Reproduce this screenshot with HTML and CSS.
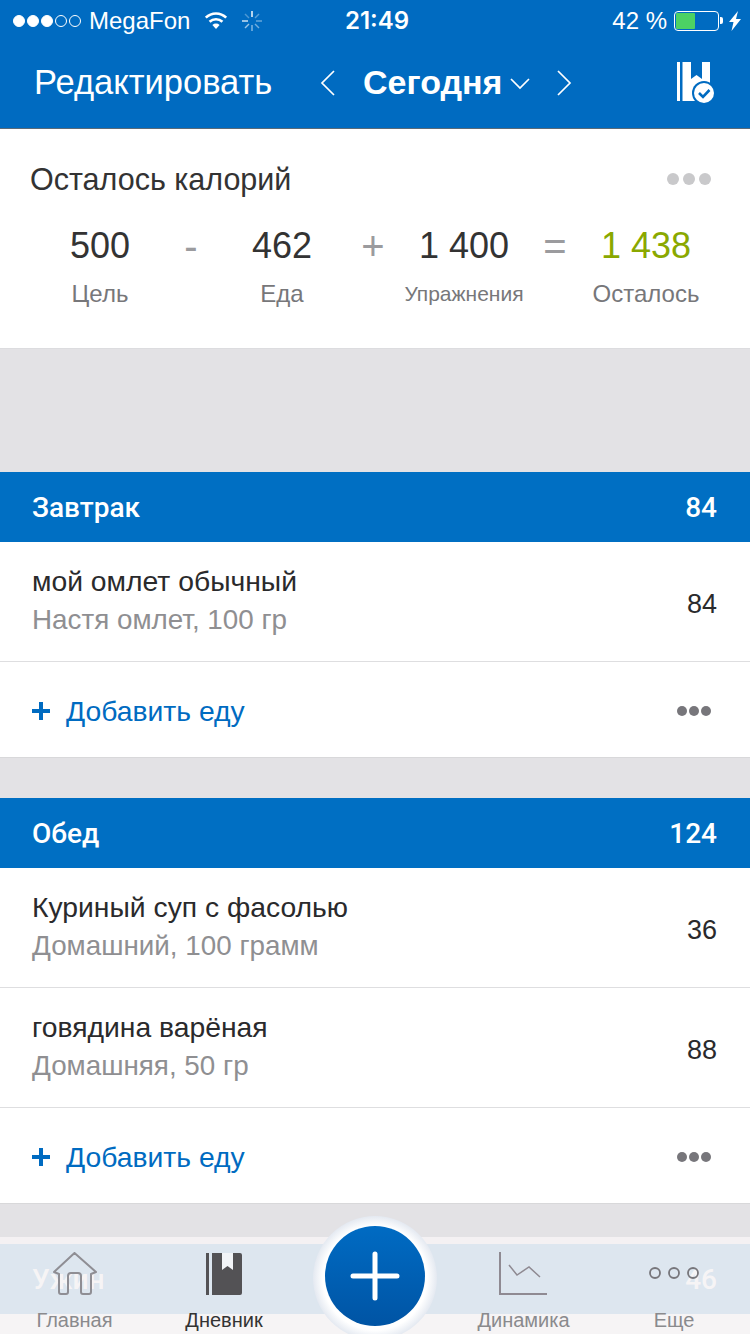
FILE: index.html
```html
<!DOCTYPE html>
<html lang="ru">
<head>
<meta charset="utf-8">
<title>Дневник</title>
<link rel="stylesheet" href="styles.css">
</head>
<body>
<div class="screen">
  <header class="top">
    <div class="status">
      <div class="status-left">
        <span class="signal"><i class="on"></i><i class="on"></i><i class="on"></i><i></i><i></i></span>
        <span class="carrier">MegaFon</span>
        <svg class="wifi" width="26" height="20" viewBox="0 0 26 20"><path d="M13 18l-3.600-4a5.200 5.200 0 0 1 7.200 0z" fill="#fff"/><path d="M6.600 10.800a9.200 9.200 0 0 1 12.800 0M2.800 6.600a14.600 14.600 0 0 1 20.400 0" fill="none" stroke="#fff" stroke-width="2.600"/></svg>
        <svg class="spin" width="22" height="22" viewBox="0 0 22 22" stroke="#fff" stroke-width="1.500"><path d="M11 1v6" opacity=".95"/><path d="M18 4l-4 4" opacity=".35"/><path d="M21 11h-6" opacity=".4"/><path d="M18 18l-4-4" opacity=".45"/><path d="M11 21v-6" opacity=".5"/><path d="M4 18l4-4" opacity=".6"/><path d="M1 11h6" opacity=".8"/><path d="M4 4l4 4" opacity=".3"/></svg>
      </div>
      <div class="clock">21:49</div>
      <div class="status-right">
        <span class="pct">42 %</span>
        <span class="battery"><span class="battery-fill"></span></span>
        <span class="battery-cap"></span>
        <svg width="12" height="20" viewBox="0 0 12 20"><path d="M9 0L0 11h4.500L2.500 20 12 8H7z" fill="#fff"/></svg>
      </div>
    </div>
    <nav class="nav">
      <span class="edit">Редактировать</span>
      <div class="date">
        <svg width="16" height="28" viewBox="0 0 16 28"><path d="M14 2L2 14l12 12" fill="none" stroke="#fff" stroke-width="1.700"/></svg>
        <span class="today">Сегодня</span>
        <svg class="caret" width="20" height="12" viewBox="0 0 20 12"><path d="M1 1l9 9 9-9" fill="none" stroke="#fff" stroke-width="1.700"/></svg>
        <svg class="next" width="16" height="28" viewBox="0 0 16 28"><path d="M2 2l12 12L2 26" fill="none" stroke="#fff" stroke-width="1.700"/></svg>
      </div>
      <svg class="book-check" width="38" height="44" viewBox="0 0 38 44">
        <path d="M0 1h3v39H0zM5.500 1H33v39H5.500z" fill="#fff"/>
        <path d="M14 1h11v17l-5.500-4-5.500 4z" fill="#006bc1"/>
        <circle cx="27" cy="32" r="12" fill="#006bc1"/>
        <circle cx="27" cy="32" r="10" fill="#fff"/>
        <path d="M22 32l4 4 6.500-7" fill="none" stroke="#006bc1" stroke-width="2.600"/>
      </svg>
    </nav>
  </header>

  <section class="summary">
    <div class="summary-head">
      <h2>Осталось калорий</h2>
      <span class="dots dots-light"><i></i><i></i><i></i></span>
    </div>
    <div class="equation">
      <div class="term"><b>500</b><span>Цель</span></div>
      <div class="op">-</div>
      <div class="term"><b>462</b><span>Еда</span></div>
      <div class="op">+</div>
      <div class="term"><b>1 400</b><span class="label-small">Упражнения</span></div>
      <div class="op">=</div>
      <div class="term"><b class="green">1 438</b><span>Осталось</span></div>
    </div>
  </section>

  <div class="spacer-ad"></div>

  <section class="meal">
    <div class="meal-head"><span>Завтрак</span><span>84</span></div>
    <div class="item">
      <div class="item-text"><div class="name">мой омлет обычный</div><div class="desc">Настя омлет, 100 гр</div></div>
      <div class="kcal">84</div>
    </div>
    <div class="add">
      <span class="plus"></span><span class="add-text">Добавить еду</span>
      <span class="dots dots-dark"><i></i><i></i><i></i></span>
    </div>
  </section>

  <section class="meal">
    <div class="meal-head"><span>Обед</span><span>124</span></div>
    <div class="item">
      <div class="item-text"><div class="name">Куриный суп с фасолью</div><div class="desc">Домашний, 100 грамм</div></div>
      <div class="kcal">36</div>
    </div>
    <div class="item">
      <div class="item-text"><div class="name">говядина варёная</div><div class="desc">Домашняя, 50 гр</div></div>
      <div class="kcal">88</div>
    </div>
    <div class="add">
      <span class="plus"></span><span class="add-text">Добавить еду</span>
      <span class="dots dots-dark"><i></i><i></i><i></i></span>
    </div>
  </section>

  <section class="meal">
    <div class="meal-head"><span>Ужин</span><span>46</span></div>
    <div class="item"></div>
  </section>

  <footer class="tabbar">
    <div class="tab">
      <svg width="46" height="44" viewBox="0 0 46 44" fill="none" stroke="#8f8e94" stroke-width="2"><path d="M7 22L2 20 22.500 1 44 20l-5 2v18a2 2 0 0 1-2 2h-6a2 2 0 0 1-2-2V24a3 3 0 0 0-3-3h-7a3 3 0 0 0-3 3v16a2 2 0 0 1-2 2H9a2 2 0 0 1-2-2z" stroke-linejoin="round"/></svg>
      <span>Главная</span>
    </div>
    <div class="tab tab-active">
      <svg width="36" height="44" viewBox="0 0 36 44"><path d="M0 1h3v42H0zM6 1h28a2 2 0 0 1 2 2v38a2 2 0 0 1-2 2H6z" fill="#535255"/><path d="M16 1h11v17l-5.500-4-5.500 4z" fill="#f2f4f7"/></svg>
      <span>Дневник</span>
    </div>
    <div class="tab tab-gap"></div>
    <div class="tab">
      <svg width="50" height="44" viewBox="0 0 50 44" fill="none" stroke="#8f8a92" stroke-width="2"><path d="M1 0v42h47"/><path d="M10 13l8 10 12-8 11 10" stroke-width="1.500"/></svg>
      <span>Динамика</span>
    </div>
    <div class="tab">
      <svg width="52" height="44" viewBox="0 0 52 44" fill="none" stroke="#77767b" stroke-width="1.800"><circle cx="7" cy="21" r="5"/><circle cx="26" cy="21" r="5"/><circle cx="45" cy="21" r="5"/></svg>
      <span>Еще</span>
    </div>
    <div class="fab">
      <div class="fab-inner">
        <svg width="50" height="50" viewBox="0 0 50 50"><path d="M25 3v44M3 25h44" stroke="#fff" stroke-width="5" stroke-linecap="round"/></svg>
      </div>
    </div>
  </footer>
</div>
</body>
</html>
```

FILE: styles.css
```css
* { box-sizing: border-box; }
html, body { margin: 0; padding: 0; }
body { font-family: "Liberation Sans", Arial, sans-serif; }
.screen {
  position: relative;
  width: 750px;
  height: 1334px;
  overflow: hidden;
  background: #e3e2e5;
  color: #2a2a2c;
}

/* top */
.top {
  height: 129px;
  background: #006bc1;
  border-bottom: 1px solid #5a6a78;
  color: #fff;
}
.status {
  height: 41px;
  display: grid;
  grid-template-columns: 1fr auto 1fr;
  align-items: center;
  padding: 0 9px 0 13px;
  font-size: 24px;
}
.status-left, .status-right { display: flex; align-items: center; }
.status-right { justify-content: flex-end; }
.signal { display: flex; gap: 2px; }
.signal i {
  width: 12px;
  height: 12px;
  border-radius: 50%;
  border: 1px solid #fff;
}
.signal i.on { background: #fff; }
.carrier { margin-left: 8px; }
.wifi { margin-left: 13px; }
.spin { margin-left: 12px; }
.clock { font-family: Inter, "Liberation Sans", sans-serif; font-weight: 600; font-size: 24px; }
.pct { margin-right: 7px; }
.battery {
  width: 45px;
  height: 20px;
  border: 1px solid #fff;
  border-radius: 4px;
  padding: 1px;
  display: block;
}
.battery-fill { display: block; width: 19px; height: 100%; background: #4cd264; border-radius: 1px; }
.battery-cap { width: 3px; height: 7px; background: #fff; margin: 0 6px 0 1px; border-radius: 0 2px 2px 0; }
.nav {
  height: 87px;
  display: flex;
  align-items: center;
  padding: 0 35px 4px 34px;
}
.edit { font-size: 34.5px; width: 286px; }
.date { display: flex; align-items: center; flex: 1; }
.today { font-size: 34px; font-weight: 700; margin-left: 27px; }
.caret { margin-left: 8px; margin-top: 3px; }
.next { margin-left: 26px; }
.book-check { flex: none; }

/* summary */
.summary {
  height: 220px;
  background: #fff;
  border-bottom: 1px solid #dcdcdf;
  padding: 30px 39px 0 30px;
}
.summary-head { display: flex; justify-content: space-between; align-items: center; }
.summary-head h2 { margin: 0; font-size: 30.5px; font-weight: 400; line-height: 40px; color: #333; }
.dots { display: flex; gap: 4px; }
.dots i { width: 12px; height: 12px; border-radius: 50%; }
.dots-light i { background: #c9c9cb; }
.dots-dark { margin-left: auto; gap: 2px; }
.dots-dark i { background: #77767b; width: 10px; height: 10px; }
.equation {
  display: grid;
  grid-template-columns: 182px 0 182px 0 182px 0 182px;
  margin: 24px -39px 0 -30px;
  padding-left: 9px;
}
.term { display: flex; flex-direction: column; align-items: center; }
.term b { font-size: 36px; font-weight: 400; line-height: 46px; color: #333; }
.term span { font-size: 24px; line-height: 34px; color: #77777a; margin-top: 8px; }
.term span.label-small { font-size: 21px; }
.term b.green { color: #8aa800; }
.op { font-size: 40px; line-height: 46px; color: #9b9b9e; display: flex; justify-content: center; }

.spacer-ad { height: 123px; }

/* meals */
.meal { margin-bottom: 40px; background: #fff; border-bottom: 1px solid #d8d8da; }
.meal-head {
  height: 70px;
  background: #006fc3;
  color: #fff;
  font-family: Roboto, "Liberation Sans", sans-serif;
  font-size: 28px;
  font-weight: 500;
  padding: 0 33px 0 32px;
  display: flex;
  justify-content: space-between;
  align-items: center;
}
.item {
  height: 120px;
  padding: 0 33px 0 32px;
  border-bottom: 1px solid #dedee0;
  display: flex;
  justify-content: space-between;
  align-items: center;
}
.item-text { margin-top: -2px; }
.name { font-size: 28.3px; line-height: 38px; color: #2a2a2c; }
.desc { font-size: 27.8px; line-height: 38px; color: #8f8f92; margin-top: 1px; }
.kcal { font-size: 27px; color: #2a2a2c; margin-top: 5px; }
.add {
  height: 95px;
  padding: 4px 39px 0 32px;
  display: flex;
  align-items: center;
}
.plus {
  width: 18px;
  height: 18px;
  background:
    linear-gradient(#006bc1, #006bc1) center / 18px 4px no-repeat,
    linear-gradient(#006bc1, #006bc1) center / 4px 18px no-repeat;
  margin-top: -2px;
}
.add-text { margin-left: 16px; font-size: 28.3px; color: #006bc1; }
.dots-dark { margin-top: -2px; }

/* tab bar */
.tabbar {
  position: absolute;
  left: 0;
  right: 0;
  bottom: 0;
  height: 97px;
  background: rgba(245, 243, 244, .9);
  display: grid;
  grid-template-columns: 149px 150px 150px 149px 152px;
  padding-top: 15px;
}
.tab { display: flex; flex-direction: column; align-items: center; gap: 14px; }
.tab svg { flex: none; }
.tab span { font-size: 20px; line-height: 21px; color: #8a8a8d; }
.tab-active span { color: #333; }
.fab {
  position: absolute;
  left: 313px;
  top: -21px;
  width: 124px;
  height: 124px;
  border-radius: 50%;
  background: radial-gradient(circle closest-side, #fff 84%, #e4e9f1 100%);
  display: flex;
  justify-content: center;
  padding-top: 10px;
}
.fab-inner {
  width: 100px;
  height: 100px;
  border-radius: 50%;
  background: linear-gradient(#006bc3, #0054a4);
  display: flex;
  align-items: center;
  justify-content: center;
}
```
